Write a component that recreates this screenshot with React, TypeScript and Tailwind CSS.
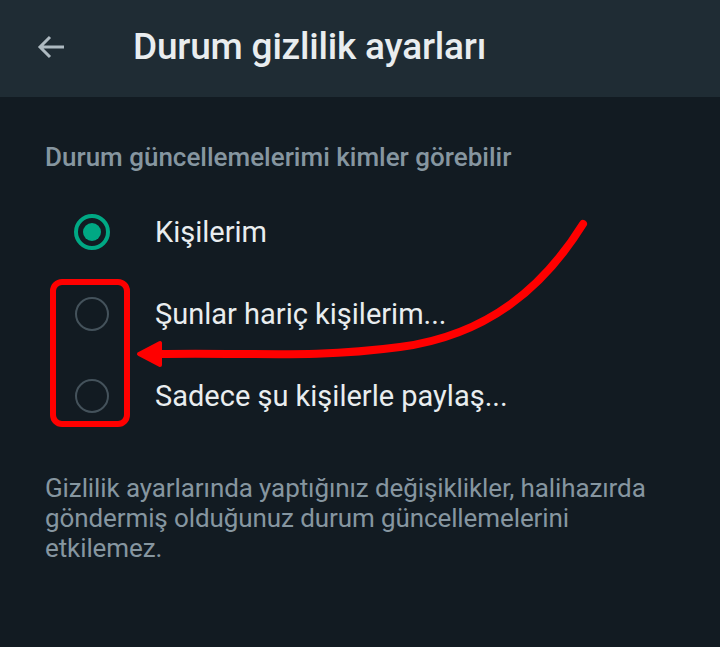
import React from 'react';

const font = { fontFamily: 'Roboto, "Noto Sans", sans-serif' };

const options = [
  { label: 'Kişilerim', checked: true },
  { label: 'Şunlar hariç kişilerim...', checked: false },
  { label: 'Sadece şu kişilerle paylaş...', checked: false },
];

function Radio({ checked }: { checked: boolean }) {
  if (checked) {
    return (
      <div className="w-[36px] h-[36px] rounded-full border-[4px] border-[#00a884] flex items-center justify-center shrink-0">
        <div className="w-[18px] h-[18px] rounded-full bg-[#00a884]" />
      </div>
    );
  }
  return <div className="w-[34px] h-[34px] mx-[1px] rounded-full border-[2.5px] border-[#44525b] shrink-0" />;
}

export default function App() {
  return (
    <div className="relative w-[720px] h-[647px] bg-[#121b22] overflow-hidden" style={font}>
      {/* header */}
      <div className="h-[97px] bg-[#1f2c34] flex items-center">
        <svg width="28" height="24" viewBox="0 0 28 24" className="ml-[37px] -mt-[3px]">
          <path d="M27 12H3M13 2L3 12l10 10" fill="none" stroke="#aebac1" strokeWidth="3" />
        </svg>
        <h1 className="ml-[68px] -mt-[4px] text-[37px] font-medium text-[#e9edef] tracking-[-0.2px]">
          Durum gizlilik ayarları
        </h1>
      </div>

      {/* body */}
      <div className="pt-[44px]">
        <div className="pl-[45px] text-[26px] leading-[32px] text-[#8696a0] font-medium">
          Durum güncellemelerimi kimler görebilir
        </div>
        <div className="mt-[18px]">
          {options.map((o) => (
            <div key={o.label} className="h-[82px] flex items-center pl-[74px]">
              <Radio checked={o.checked} />
              <span className="ml-[45px] text-[29px] text-[#e9edef] mt-[2px]">{o.label}</span>
            </div>
          ))}
        </div>
        <p className="mt-[36px] pl-[45px] pr-[40px] text-[26px] leading-[30px] text-[#8696a0] tracking-[-0.1px]">
          Gizlilik ayarlarında yaptığınız değişiklikler, halihazırda göndermiş olduğunuz durum güncellemelerini
          etkilemez.
        </p>
      </div>

      {/* annotation overlay */}
      <div className="absolute left-[50px] top-[279px] w-[80px] h-[148px] border-[6px] border-[#ff0000] rounded-[12px]" />
      <svg className="absolute inset-0 pointer-events-none" width="720" height="647" viewBox="0 0 720 647">
        <path
          d="M583 224 C545 285 490 335 400 347 S250 352 158 354"
          fill="none"
          stroke="#ff0000"
          strokeWidth="8"
          strokeLinecap="round"
        />
        <path d="M139 354 L160 343 L160 365 Z" fill="#ff0000" stroke="#ff0000" strokeWidth="4" strokeLinejoin="round" />
      </svg>
    </div>
  );
}
